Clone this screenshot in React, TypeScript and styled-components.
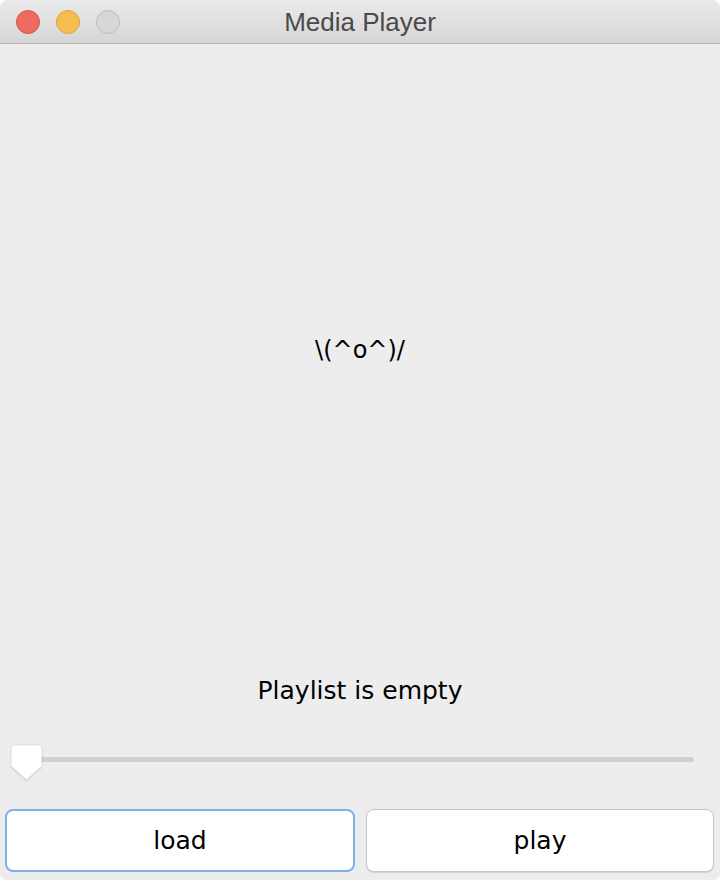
import React from 'react';
import styled, { createGlobalStyle } from 'styled-components';

const GlobalStyle = createGlobalStyle`
  html, body {
    margin: 0;
    padding: 0;
    background: #ffffff;
  }
  * {
    box-sizing: border-box;
  }
`;

export default function App() {
  return (
    <>
      <GlobalStyle />
      <StyledWindow>
        <StyledTitleBar>
          <StyledLights>
            <StyledLight color="#ee6a5f" edge="#d65449" />
            <StyledLight color="#f6be4f" edge="#dba33b" />
            <StyledLight color="#d7d7d7" edge="#bcbcbc" />
          </StyledLights>
          <StyledTitle>Media Player</StyledTitle>
        </StyledTitleBar>

        <StyledContent>
          <StyledStage>\(^o^)/</StyledStage>
          <StyledStatus>Playlist is empty</StyledStatus>

          <StyledSliderRow>
            <StyledTrack />
            <StyledThumb width="33" height="38" viewBox="0 0 33 38">
              <defs>
                <filter id="thumbShadow" x="-20%" y="-20%" width="140%" height="140%">
                  <feDropShadow dx="0" dy="0.5" stdDeviation="0.8" floodColor="#000" floodOpacity="0.3" />
                </filter>
              </defs>
              <path
                d="M5 1.5 H28 a3.5 3.5 0 0 1 3.5 3.5 V22 L16.5 35.5 L1.5 22 V5 a3.5 3.5 0 0 1 3.5 -3.5 Z"
                fill="#ffffff"
                filter="url(#thumbShadow)"
              />
            </StyledThumb>
          </StyledSliderRow>

          <StyledActions>
            <StyledButton focused>load</StyledButton>
            <StyledButton>play</StyledButton>
          </StyledActions>
        </StyledContent>
      </StyledWindow>
    </>
  );
}

const StyledWindow = styled.div`
  width: 720px;
  height: 880px;
  display: flex;
  flex-direction: column;
  background: #ededed;
  border-radius: 8px 8px 6px 6px;
  overflow: hidden;
`;

const StyledTitleBar = styled.div`
  position: relative;
  height: 44px;
  flex: 0 0 44px;
  display: flex;
  align-items: center;
  justify-content: center;
  background: linear-gradient(to bottom, #ebebeb, #d5d5d5);
  border-bottom: 1px solid #b4b4b4;
`;

const StyledLights = styled.div`
  position: absolute;
  left: 16px;
  top: 10px;
  display: flex;
  gap: 16px;
`;

const StyledLight = styled.span<{ color: string; edge: string }>`
  width: 24px;
  height: 24px;
  border-radius: 50%;
  background: ${(p) => p.color};
  border: 1px solid ${(p) => p.edge};
`;

const StyledTitle = styled.div`
  font-family: 'Liberation Sans', Arial, sans-serif;
  font-size: 26px;
  color: #4a4a4a;
  margin-top: 1px;
`;

const StyledContent = styled.div`
  flex: 1;
  display: flex;
  flex-direction: column;
  font-family: 'DejaVu Sans', 'Noto Sans', sans-serif;
  color: #000;
`;

const StyledStage = styled.div`
  height: 612px;
  display: flex;
  align-items: center;
  justify-content: center;
  font-size: 24px;
`;

const StyledStatus = styled.div`
  height: 68px;
  display: flex;
  align-items: center;
  justify-content: center;
  font-size: 25px;
`;

const StyledSliderRow = styled.div`
  position: relative;
  height: 60px;
  padding: 33px 26px 0 12px;
`;

const StyledTrack = styled.div`
  height: 5px;
  border-radius: 2.5px;
  background: #d0d0d0;
`;

const StyledThumb = styled.svg`
  position: absolute;
  left: 10px;
  top: 20px;
`;

const StyledActions = styled.div`
  flex: 1;
  display: flex;
  gap: 11px;
  padding: 25px 6px 8px 5px;
`;

const StyledButton = styled.button<{ focused?: boolean }>`
  flex: 1;
  height: 63px;
  background: #ffffff;
  border-radius: 8px;
  border: ${(p) => (p.focused ? '2px solid #7fb0ea' : '1px solid #c6c6c6')};
  box-shadow: ${(p) => (p.focused ? 'none' : '0 1px 1px rgba(0, 0, 0, 0.12)')};
  font-family: 'DejaVu Sans', 'Noto Sans', sans-serif;
  font-size: 25px;
  color: #000;
  padding: 0;
`;
